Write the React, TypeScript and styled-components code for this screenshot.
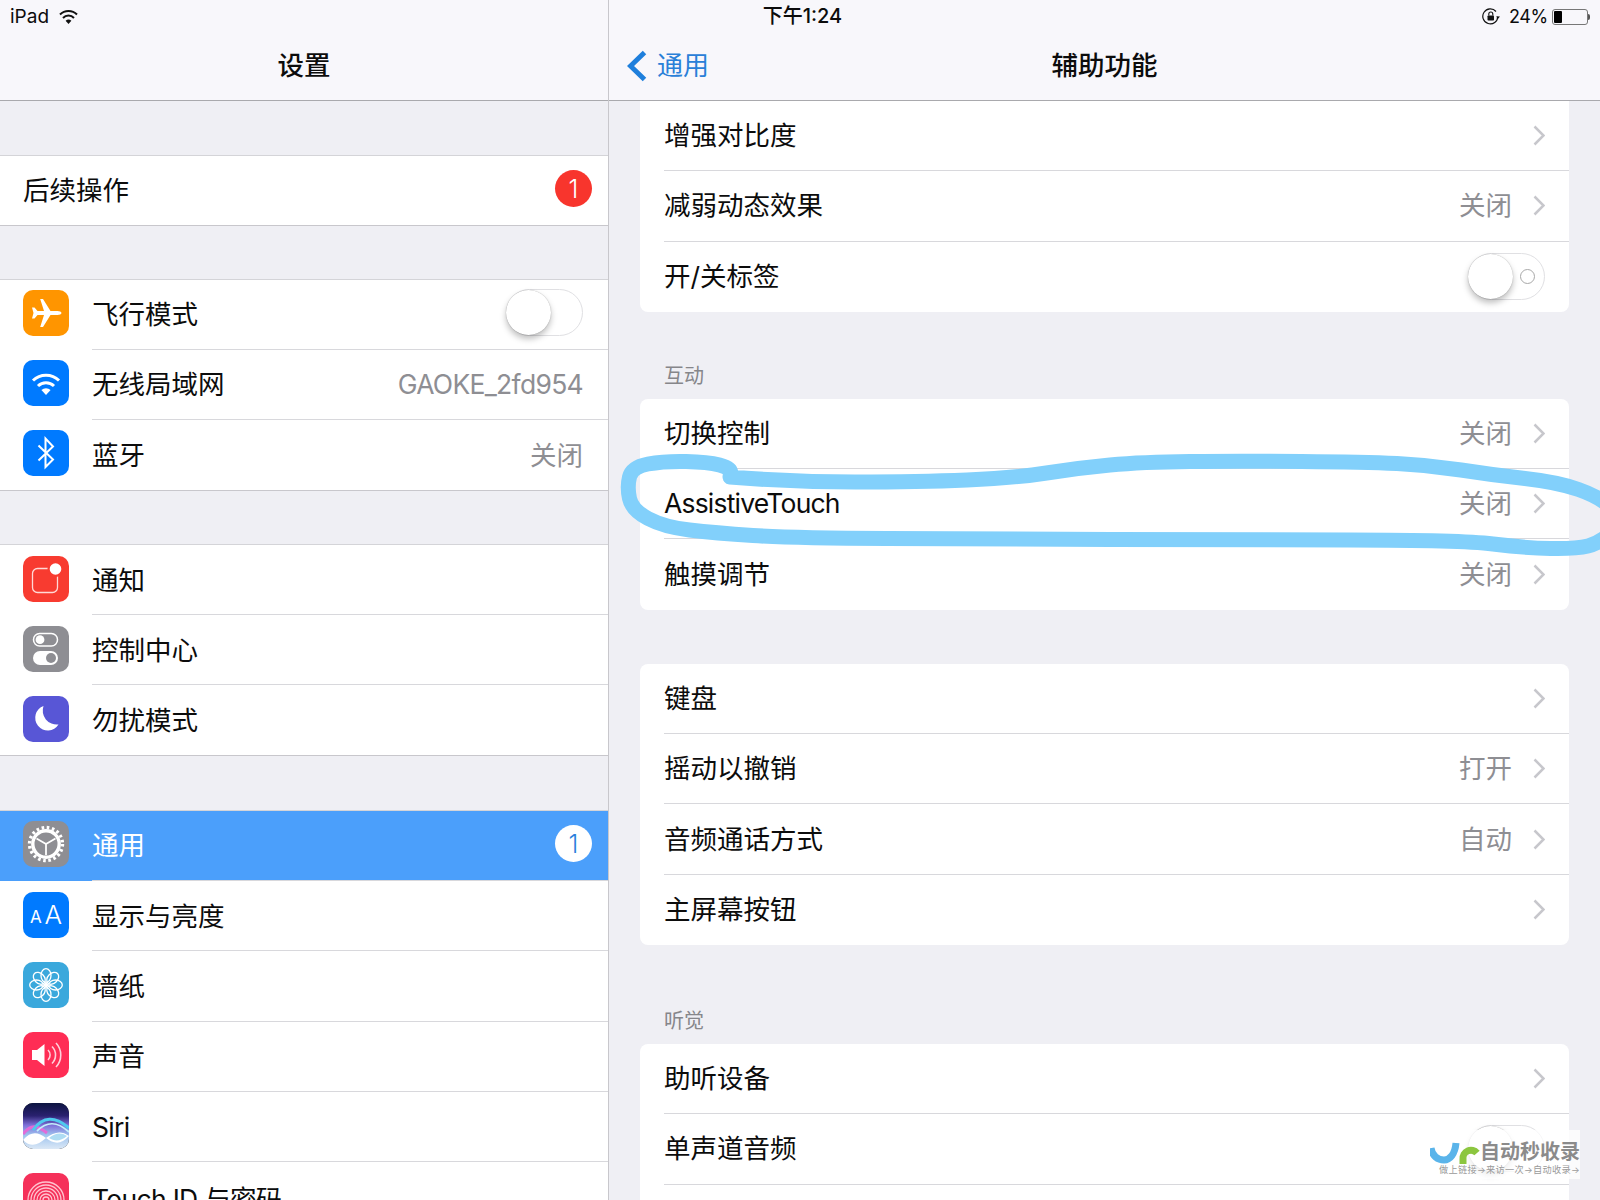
import React from 'react';
import styled, { createGlobalStyle } from 'styled-components';

const FONT = `Inter, "Noto Sans CJK SC", sans-serif`;

const GlobalStyle = createGlobalStyle`
  html, body {
    margin: 0;
    padding: 0;
    background: #efeff4;
    font-family: ${FONT};
  }
`;

type SideRowData = {
  label: string,
  icon?: React.ReactNode,
  value?: string,
  badge?: string,
  toggle?: boolean,
  active?: boolean,
}

type DetailRowData = {
  label: string,
  value?: string,
  toggle?: boolean,
  labelMark?: boolean,
  noChevron?: boolean,
}

const isLatin = (text: string) => /^[A-Za-z]/.test(text);

// the photographed rows are not quite the same height from group to group
const SIDE_ROW_HEIGHTS = [68.5, 70, 70, 70.3];

/* ---------- styles ---------- */

const Page = styled.div`
  position: relative;
  display: flex;
  width: 1600px;
  height: 1200px;
  overflow: hidden;
  background: #efeff4;
  color: #0c0c0c;
`;

const StatusBar = styled.div`
  position: absolute;
  top: 0;
  left: 0;
  right: 0;
  display: grid;
  grid-template-columns: 1fr auto 1fr;
  align-items: center;
  height: 32px;
  padding: 0 10px;
  font-size: 19px;
  z-index: 2;
`;

const StatusLeft = styled.div`
  display: flex;
  align-items: center;
  gap: 10px;
`;

const StatusTime = styled.div`
  margin-bottom: 4px;
  margin-left: 5px;
  font-weight: 500;
  font-size: 20px;
`;

const StatusRight = styled.div`
  display: flex;
  align-items: center;
  justify-content: flex-end;
`;

const BatteryText = styled.span`
  margin-left: 8px;
  margin-right: 4px;
  font-size: 18px;
  letter-spacing: -0.3px;
`;

const Battery = styled.div`
  box-sizing: border-box;
  width: 36px;
  height: 16px;
  padding: 1px;
  border: 1px solid #777;
  border-radius: 3px;
`;

const BatteryFill = styled.div`
  width: 8px;
  height: 100%;
  background: #000;
  border-radius: 1px;
`;

const BatteryNub = styled.div`
  width: 2px;
  height: 6px;
  background: #555;
  border-radius: 0 2px 2px 0;
`;

const SidePane = styled.div`
  box-sizing: content-box;
  flex: none;
  width: 608px;
  border-right: 1px solid #c8c7cc;
`;

const DetailPane = styled.div`
  flex: 1;
  min-width: 0;
`;

const NavBar = styled.header`
  box-sizing: border-box;
  position: relative;
  display: flex;
  align-items: center;
  justify-content: center;
  height: 101px;
  padding-top: 30px;
  background: #f8f7fb;
  border-bottom: 1px solid #a9a9ad;
`;

const NavTitle = styled.h1`
  margin: 0;
  font-size: 26.5px;
  font-weight: 500;
  line-height: 36px;
`;

const BackLink = styled.div`
  position: absolute;
  left: 18px;
  top: 50px;
  display: flex;
  align-items: center;
  gap: 10px;
  font-size: 26px;
  line-height: 32px;
  color: #2a80d8;
`;

const SideGroup = styled.div<{ $first?: boolean }>`
  margin-top: ${(p) => (p.$first ? 54 : 54.4)}px;
  margin-bottom: -1px;
  background: #fff;
  border-top: 1px solid #d4d4d8;
  border-bottom: 1px solid #c8c7cc;
`;

const SideRow = styled.div<{ $active?: boolean, $height: number }>`
  box-sizing: border-box;
  display: flex;
  align-items: center;
  height: ${(p) => p.$height}px;
  padding-left: 23px;
  background: ${(p) => (p.$active ? '#4b9ffb' : 'transparent')};
`;

const IconTile = styled.div<{ $bg: string }>`
  position: relative;
  flex: none;
  display: flex;
  align-items: center;
  justify-content: center;
  width: 46px;
  height: 46px;
  margin-bottom: 3px;
  border-radius: 10px;
  overflow: hidden;
  background: ${(p) => p.$bg};
  color: #fff;
`;

const SmallA = styled.span`
  margin-top: 4px;
  margin-right: 3px;
  font-size: 17px;
  font-weight: 400;
`;

const BigA = styled.span`
  font-size: 26px;
  font-weight: 300;
`;

const SideBody = styled.div<{ $active?: boolean, $plain?: boolean, $last?: boolean }>`
  box-sizing: border-box;
  flex: 1;
  display: flex;
  align-items: center;
  justify-content: space-between;
  align-self: stretch;
  min-width: 0;
  margin-left: ${(p) => (p.$plain ? 0 : 23)}px;
  padding-right: ${(p) => (p.$plain || p.$active ? 16 : 25)}px;
  padding-bottom: 3px;
  border-bottom: ${(p) => (p.$last ? 'none' : '1px solid #d8d8dc')};
`;

const SideLabel = styled.span<{ $active?: boolean, $latin?: boolean }>`
  margin-top: ${(p) => (p.$latin ? 3 : 0)}px;
  font-size: 26.5px;
  letter-spacing: ${(p) => (p.$latin ? -0.7 : 0)}px;
  color: ${(p) => (p.$active ? '#fff' : '#0c0c0c')};
`;

const SideValue = styled.span<{ $latin?: boolean }>`
  margin-top: ${(p) => (p.$latin ? 3 : 0)}px;
  font-size: 26.5px;
  letter-spacing: ${(p) => (p.$latin ? -0.7 : 0)}px;
  color: #8e8e93;
`;

const Badge = styled.span<{ $active?: boolean }>`
  display: flex;
  align-items: center;
  justify-content: center;
  width: 37px;
  height: 37px;
  border-radius: 50%;
  font-size: 25px;
  font-weight: 300;
  background: ${(p) => (p.$active ? '#fff' : '#f8352d')};
  color: ${(p) => (p.$active ? '#2a7fdc' : '#fff')};
`;

const Toggle = styled.span`
  box-sizing: border-box;
  flex: none;
  display: flex;
  align-items: center;
  width: 77px;
  height: 47px;
  border: 1.5px solid #e0e0e3;
  border-radius: 24px;
  background: #fff;
`;

const Knob = styled.span`
  flex: none;
  width: 45px;
  height: 45px;
  margin-left: -1px;
  border-radius: 50%;
  background: #fff;
  box-shadow: 0 4px 6px rgba(0, 0, 0, .25), 0 0 1px rgba(0, 0, 0, .35);
`;

const OffMark = styled.span`
  flex: none;
  box-sizing: border-box;
  width: 15px;
  height: 15px;
  margin-left: 7px;
  border: 1.5px solid #a8a8a8;
  border-radius: 50%;
`;

const GroupHeader = styled.div<{ $height: number }>`
  box-sizing: border-box;
  display: flex;
  align-items: flex-end;
  height: ${(p) => p.$height}px;
  padding-left: 55px;
`;

const GroupTitle = styled.span`
  margin-bottom: 11px;
  font-size: 20px;
  line-height: 24px;
  color: #86868a;
`;

const Card = styled.div<{ $flush?: boolean }>`
  margin: 0 31px;
  background: #fff;
  border-radius: ${(p) => (p.$flush ? '0 0 8px 8px' : '8px')};
`;

const DetailRow = styled.div<{ $last?: boolean }>`
  box-sizing: border-box;
  display: flex;
  align-items: center;
  height: 70.3px;
  margin-left: 24px;
  padding-right: 24px;
  border-bottom: ${(p) => (p.$last ? 'none' : '1px solid #d8d8dc')};
`;

const DetailLabel = styled.span<{ $latin?: boolean }>`
  flex: 1;
  margin-bottom: ${(p) => (p.$latin ? 2 : 4)}px;
  font-size: 26.5px;
  letter-spacing: ${(p) => (p.$latin ? -0.8 : 0)}px;
`;

const DetailValue = styled.span`
  margin-right: 21px;
  margin-bottom: 4px;
  font-size: 26.5px;
  color: #8e8e93;
`;

const ChevronIcon = styled.svg`
  flex: none;
  width: 12px;
  height: 21px;
  stroke: #c7c7cc;
  stroke-width: 2.5px;
`;

const Scribble = styled.svg`
  position: absolute;
  top: 0;
  left: 0;
  width: 1600px;
  height: 1200px;
  fill: none;
  stroke: #82d0fb;
  stroke-width: 15px;
  stroke-linecap: round;
  stroke-linejoin: round;
  pointer-events: none;
`;

const Watermark = styled.div`
  position: absolute;
  left: 1428px;
  top: 1130px;
  display: flex;
  flex-direction: column;
  align-items: flex-end;
  width: 152px;
  padding: 9px 0 4px;
  background: rgba(255, 255, 255, .72);
`;

const WatermarkTop = styled.div`
  display: flex;
  align-items: center;
`;

const WatermarkName = styled.span`
  font-size: 20px;
  line-height: 26px;
  font-weight: 700;
  color: #8b8b8b;
`;

const WatermarkSub = styled.span`
  font-size: 9.2px;
  line-height: 10px;
  letter-spacing: .3px;
  color: #9a9a9a;
`;

/* ---------- tile icons ---------- */

const AirplaneGlyph = () => (
  <svg width="46" height="46" viewBox="0 0 46 46">
    <path fill="#fff" d="M38.5 23c0 1.2-2 2-4 2h-7L20 37h-2.8L21 25h-6.5l-3 3.5H9l1.5-5.5L9 17.5h2.5l3 3.5H21L17.2 9H20l7.5 12h7c2 0 4 .8 4 2z" />
  </svg>
);

const WifiGlyph = () => (
  <svg width="46" height="46" viewBox="0 0 46 46" fill="none">
    <path stroke="#fff" strokeWidth="3" d="M10 20.5a18.5 18.5 0 0 1 26 0" />
    <path stroke="#fff" strokeWidth="3" d="M15 26a11.5 11.5 0 0 1 16 0" />
    <path fill="#fff" d="M23 35l-4.6-5a7 7 0 0 1 9.2 0z" />
  </svg>
);

const BluetoothGlyph = () => (
  <svg width="46" height="46" viewBox="0 0 46 46" fill="none">
    <path stroke="#fff" strokeWidth="2" d="M15.5 15.5L30 29.5 22.5 37V8.5l7.5 8L15.5 30.5" />
  </svg>
);

const NotificationGlyph = () => (
  <svg width="46" height="46" viewBox="0 0 46 46" fill="none">
    <rect x="9.5" y="12.5" width="25" height="24" rx="5" stroke="#ffd9d6" strokeWidth="1.3" />
    <circle cx="32.5" cy="13" r="8" fill="#f83b30" />
    <circle cx="32.5" cy="13" r="5.8" fill="#fff" />
  </svg>
);

const ControlGlyph = () => (
  <svg width="46" height="46" viewBox="0 0 46 46" fill="none">
    <rect x="10.5" y="7.5" width="24" height="12.5" rx="6.2" stroke="#fff" strokeWidth="1.5" />
    <circle cx="17" cy="13.7" r="4.4" fill="#fff" />
    <rect x="10" y="25" width="25" height="14" rx="7" fill="#fff" />
    <circle cx="28" cy="32" r="5" fill="#8e8e93" />
  </svg>
);

const MoonGlyph = () => (
  <svg width="46" height="46" viewBox="0 0 46 46">
    <path fill="#fff" d="M20.5 10A12.6 12.6 0 1 0 35.5 28.5 14 14 0 0 1 20.5 10z" />
  </svg>
);

const GearGlyph = () => (
  <svg width="46" height="46" viewBox="0 0 46 46" fill="none" stroke="#fff">
    <circle cx="23" cy="23" r="16.5" strokeWidth="3.4" strokeDasharray="2.6 2.6" />
    <circle cx="23" cy="23" r="13.2" strokeWidth="3.4" />
    <path strokeWidth="1.8" d="M23 23v11M23 23l-9.5-5.5M23 23l9.5-5.5" />
  </svg>
);

const FlowerGlyph = () => (
  <svg width="46" height="46" viewBox="0 0 46 46" fill="none" stroke="#fff" strokeWidth="1.3">
    {[0, 45, 90, 135, 180, 225, 270, 315].map((deg) => (
      <ellipse key={deg} cx="23" cy="13.5" rx="5" ry="6.8" transform={`rotate(${deg} 23 23)`} />
    ))}
    <circle cx="23" cy="23" r="2.3" fill="#fff" stroke="none" />
  </svg>
);

const SpeakerGlyph = () => (
  <svg width="46" height="46" viewBox="0 0 46 46" fill="none">
    <path fill="#fff" d="M9 18h5l7.5-6v22L14 28H9z" />
    <path stroke="#ffd0da" strokeWidth="1.6" d="M25 18a7 7 0 0 1 0 10M29 14.5a12 12 0 0 1 0 17M33 11a17.5 17.5 0 0 1 0 24" />
  </svg>
);

const SiriGlyph = () => (
  <svg width="46" height="46" viewBox="0 0 46 46" fill="none">
    <defs>
      <linearGradient id="siriBg" x1="0" y1="0" x2="0" y2="1">
        <stop offset="0" stopColor="#0c1440" />
        <stop offset="0.28" stopColor="#2a2170" />
        <stop offset="0.48" stopColor="#7e6ed8" />
        <stop offset="0.7" stopColor="#9fc4ee" />
        <stop offset="1" stopColor="#dbe8f6" />
      </linearGradient>
    </defs>
    <rect width="46" height="46" fill="url(#siriBg)" />
    <path stroke="#e26bd8" strokeWidth="3" d="M0 31C8 21 14 22 24 30" />
    <path stroke="#4fc9ee" strokeWidth="3" d="M10 27C20 13 32 13 46 25" />
    <path stroke="#c3effa" strokeWidth="1.8" d="M14 28C24 18 34 18 46 29" />
    <path fill="#fff" d="M0 37C8 28 15 29 23 35 31 29 38 27 46 33 38 42 31 41 23 35 15 42 8 45 0 37z" />
    <path fill="#aedcf3" d="M26 35c6-5 12-6 18-2-6 5-12 6-18 2z" />
  </svg>
);

const FingerprintGlyph = () => (
  <svg width="46" height="46" viewBox="0 0 46 46" fill="none" stroke="#ffc3cf" strokeWidth="1.3">
    {[3, 6, 9, 12, 15, 18].map((r) => (
      <path key={r} d={`M${23 - r} 46V27a${r} ${r} 0 0 1 ${r * 2} 0V46`} />
    ))}
  </svg>
);

/* ---------- status bar glyphs ---------- */

const StatusWifi = () => (
  <svg width="19" height="16" viewBox="0 0 19 16" fill="none">
    <path stroke="#111" strokeWidth="2" d="M1 5.5a12 12 0 0 1 17 0" />
    <path stroke="#111" strokeWidth="2" d="M4 9a7.5 7.5 0 0 1 11 0" />
    <path fill="#111" d="M9.5 15L6.6 11.8a4.4 4.4 0 0 1 5.8 0z" />
  </svg>
);

const RotationLock = () => (
  <svg width="19" height="17" viewBox="0 0 19 17" fill="none">
    <path stroke="#111" strokeWidth="1.2" d="M15.8 8.5A7.5 7.5 0 1 1 14 3.5" />
    <path fill="#111" d="M14 8.5h4l-2 2.3z" />
    <rect x="5.5" y="7.5" width="6.5" height="5" rx="0.8" fill="#111" />
    <path stroke="#111" strokeWidth="1.1" d="M6.8 7.5V6a2 2 0 0 1 4 0v1.5" />
  </svg>
);

const Chevron = () => (
  <ChevronIcon viewBox="0 0 12 21" fill="none">
    <path d="M1.5 1.5L10.5 10.5 1.5 19.5" />
  </ChevronIcon>
);

const scribble: [number, number][] = [
  [730, 477], [791, 482], [919, 482], [1015, 478], [1078, 468], [1142, 462], [1238, 461],
  [1365, 462], [1429, 465], [1493, 475], [1557, 482], [1600, 497], [1625, 520], [1600, 543],
  [1576, 549], [1525, 548], [1461, 540], [1238, 540], [983, 539], [791, 538], [715, 533],
  [664, 527], [632, 510], [627, 487], [632, 467], [664, 461], [708, 462], [731, 468], [730, 477],
];

const smoothPath = (pts: [number, number][]) => {
  let d = `M${pts[0][0]} ${pts[0][1]}`;
  for (let i = 1; i < pts.length - 1; i += 1) {
    const mx = (pts[i][0] + pts[i + 1][0]) / 2;
    const my = (pts[i][1] + pts[i + 1][1]) / 2;
    d += `Q${pts[i][0]} ${pts[i][1]} ${mx} ${my}`;
  }
  const last = pts[pts.length - 1];
  return `${d}L${last[0]} ${last[1]}`;
};

/* ---------- data ---------- */

const sideGroups: SideRowData[][] = [
  [{ label: '后续操作', badge: '1' }],
  [
    { label: '飞行模式', icon: <IconTile $bg="#ff9500"><AirplaneGlyph /></IconTile>, toggle: true },
    { label: '无线局域网', icon: <IconTile $bg="#007aff"><WifiGlyph /></IconTile>, value: 'GAOKE_2fd954' },
    { label: '蓝牙', icon: <IconTile $bg="#007aff"><BluetoothGlyph /></IconTile>, value: '关闭' },
  ],
  [
    { label: '通知', icon: <IconTile $bg="#f83b30"><NotificationGlyph /></IconTile> },
    { label: '控制中心', icon: <IconTile $bg="#8e8e93"><ControlGlyph /></IconTile> },
    { label: '勿扰模式', icon: <IconTile $bg="#5856d6"><MoonGlyph /></IconTile> },
  ],
  [
    { label: '通用', icon: <IconTile $bg="#8e8e93"><GearGlyph /></IconTile>, badge: '1', active: true },
    { label: '显示与亮度', icon: <IconTile $bg="#007aff"><SmallA>A</SmallA><BigA>A</BigA></IconTile> },
    { label: '墙纸', icon: <IconTile $bg="#3aa8dc"><FlowerGlyph /></IconTile> },
    { label: '声音', icon: <IconTile $bg="#ff2d55"><SpeakerGlyph /></IconTile> },
    { label: 'Siri', icon: <IconTile $bg="#222"><SiriGlyph /></IconTile> },
    { label: 'Touch ID 与密码', icon: <IconTile $bg="#f5315a"><FingerprintGlyph /></IconTile> },
  ],
];

const detailGroups: { title?: string, gap: number, flush?: boolean, rows: DetailRowData[] }[] = [
  {
    gap: 0,
    flush: true,
    rows: [
      { label: '增强对比度' },
      { label: '减弱动态效果', value: '关闭' },
      { label: '开/关标签', toggle: true, labelMark: true },
    ],
  },
  {
    title: '互动',
    gap: 87,
    rows: [
      { label: '切换控制', value: '关闭' },
      { label: 'AssistiveTouch', value: '关闭' },
      { label: '触摸调节', value: '关闭' },
    ],
  },
  {
    gap: 54,
    rows: [
      { label: '键盘' },
      { label: '摇动以撤销', value: '打开' },
      { label: '音频通话方式', value: '自动' },
      { label: '主屏幕按钮' },
    ],
  },
  {
    title: '听觉',
    gap: 99,
    rows: [
      { label: '助听设备' },
      { label: '单声道音频', toggle: true },
      { label: '', noChevron: true },
    ],
  },
];

/* ---------- page ---------- */

const App: React.FC = () => (
  <>
    <GlobalStyle />
    <Page>
      <StatusBar>
        <StatusLeft>
          <span>iPad</span>
          <StatusWifi />
        </StatusLeft>
        <StatusTime>下午1:24</StatusTime>
        <StatusRight>
          <RotationLock />
          <BatteryText>24%</BatteryText>
          <Battery>
            <BatteryFill />
          </Battery>
          <BatteryNub />
        </StatusRight>
      </StatusBar>

      <SidePane>
        <NavBar>
          <NavTitle>设置</NavTitle>
        </NavBar>
        {sideGroups.map((group, i) => (
          <SideGroup key={group[0].label} $first={i === 0}>
            {group.map((row, j) => (
              <SideRow key={row.label} $active={row.active} $height={SIDE_ROW_HEIGHTS[i]}>
                {row.icon}
                <SideBody $active={row.active} $plain={!row.icon} $last={j === group.length - 1}>
                  <SideLabel $active={row.active} $latin={isLatin(row.label)}>{row.label}</SideLabel>
                  {row.value && <SideValue $latin={isLatin(row.value)}>{row.value}</SideValue>}
                  {row.toggle && <Toggle><Knob /></Toggle>}
                  {row.badge && <Badge $active={row.active}>{row.badge}</Badge>}
                </SideBody>
              </SideRow>
            ))}
          </SideGroup>
        ))}
      </SidePane>

      <DetailPane>
        <NavBar>
          <BackLink>
            <svg width="20" height="32" viewBox="0 0 20 32" fill="none">
              <path stroke="#1f7fdc" strokeWidth="5" d="M17.5 2.5L3.5 16l14 13.5" />
            </svg>
            <span>通用</span>
          </BackLink>
          <NavTitle>辅助功能</NavTitle>
        </NavBar>
        {detailGroups.map((group) => (
          <section key={group.rows[0].label}>
            <GroupHeader $height={group.gap}>
              {group.title && <GroupTitle>{group.title}</GroupTitle>}
            </GroupHeader>
            <Card $flush={group.flush}>
              {group.rows.map((row, j) => (
                <DetailRow key={row.label || j} $last={j === group.rows.length - 1}>
                  <DetailLabel $latin={isLatin(row.label)}>{row.label}</DetailLabel>
                  {row.value && <DetailValue>{row.value}</DetailValue>}
                  {row.toggle ? (
                    <Toggle><Knob />{row.labelMark && <OffMark />}</Toggle>
                  ) : (!row.noChevron && <Chevron />)}
                </DetailRow>
              ))}
            </Card>
          </section>
        ))}
      </DetailPane>

      <Scribble viewBox="0 0 1600 1200">
        <path d={smoothPath(scribble)} />
      </Scribble>

      <Watermark>
        <WatermarkTop>
          <svg width="50" height="24" viewBox="0 0 50 24" fill="none">
            <path stroke="#5ab4ea" strokeWidth="7" d="M1 8c1 8 7 12 13 12s11-6 12-17" />
            <path stroke="#8cc63f" strokeWidth="7" d="M33 24v-5a8 8 0 0 1 14-6" />
          </svg>
          <WatermarkName>自动秒收录</WatermarkName>
        </WatermarkTop>
        <WatermarkSub>做上链接→来访一次→自动收录→</WatermarkSub>
      </Watermark>
    </Page>
  </>
);

export default App;
